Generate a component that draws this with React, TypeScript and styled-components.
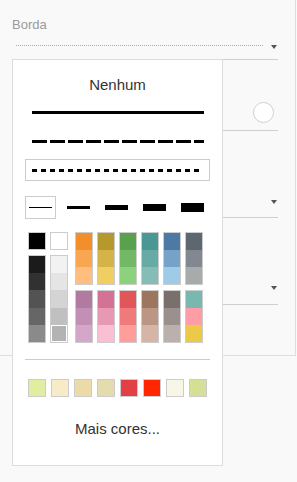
import React from 'react';
import styled, { createGlobalStyle } from 'styled-components';

const Global = createGlobalStyle`
  html, body { margin: 0; padding: 0; background: #f9f9f9; }
  body { font-family: "Liberation Sans", Arial, sans-serif; }
  * { box-sizing: border-box; }
`;

const Page = styled.div`
  position: relative;
  width: 297px;
  height: 482px;
  overflow: hidden;
`;

const Panel = styled.div`
  width: 296px;
  height: 356px;
  border-right: 1px solid #dedede;
  border-bottom: 1px solid #dedede;
  padding: 17px 17px 0 12px;
  display: flex;
  flex-direction: column;
`;

const Label = styled.div`
  font-size: 13px;
  line-height: 15px;
  color: #999;
`;

const Fields = styled.div`
  margin-left: 4px;
  flex: 1;
  display: flex;
  flex-direction: column;
`;

const DropRow = styled.div`
  margin-top: 13px;
  margin-bottom: 10px;
  height: 4px;
  display: flex;
  align-items: flex-start;
`;

const Dotted = styled.div`
  flex: 1;
  border-top: 1px dotted #aaa;
`;

const Arrow = styled.div`
  width: 0;
  height: 0;
  border-left: 3px solid transparent;
  border-right: 3px solid transparent;
  border-top: 4px solid #555;
  margin-left: 8px;
  margin-right: 1px;
`;

const Row = styled.div<{ $h?: number; $pb?: number }>`
  border-top: 1px solid #cfcfcf;
  height: ${(p) => (p.$h ? `${p.$h}px` : 'auto')};
  flex: ${(p) => (p.$h ? 'none' : '1')};
  display: flex;
  align-items: flex-end;
  justify-content: flex-end;
  padding-bottom: ${(p) => p.$pb ?? 0}px;
`;

const Circle = styled.div`
  width: 21px;
  height: 21px;
  border-radius: 50%;
  border: 1px solid #cfcfcf;
  background: #fff;
  margin-right: 4px;
`;

const BlueMark = styled.div`
  width: 6px;
  height: 6px;
  border-radius: 2px;
  background: #5b9bd5;
  margin-right: 44px;
  margin-bottom: 1px;
`;

const Popup = styled.div`
  position: absolute;
  left: 12px;
  top: 59px;
  width: 211px;
  height: 407px;
  background: #fff;
  border: 1px solid #dcdcdc;
  padding: 14px 12px 0 12px;
  display: flex;
  flex-direction: column;
`;

const Title = styled.div`
  height: 22px;
  line-height: 22px;
  font-size: 15px;
  color: #333;
  text-align: center;
`;

const Options = styled.div`
  margin-top: 5px;
  display: flex;
  flex-direction: column;
  gap: 7px;
`;

const LineOption = styled.div<{ $selected?: boolean }>`
  height: 22px;
  border: 1px solid ${(p) => (p.$selected ? '#cccccc' : 'transparent')};
  padding: 9px 0 0 6px;
`;

const StrokeLine = styled.div<{ $kind: 'solid' | 'dash' | 'dot' }>`
  height: 3px;
  width: ${(p) => (p.$kind === 'dot' ? 169 : 172)}px;
  background: ${(p) =>
    p.$kind === 'solid'
      ? '#000'
      : p.$kind === 'dash'
      ? 'repeating-linear-gradient(to right, #000 0 15px, transparent 15px 18px)'
      : 'repeating-linear-gradient(to right, #000 0 5px, transparent 5px 9px)'};
`;

const Weights = styled.div`
  margin-top: 15px;
  display: flex;
  gap: 7px;
`;

const WeightCell = styled.div<{ $selected?: boolean }>`
  width: 31px;
  height: 23px;
  border: 1px solid ${(p) => (p.$selected ? '#cccccc' : 'transparent')};
  display: flex;
  align-items: center;
  justify-content: center;
`;

const WeightLine = styled.div<{ $w: number }>`
  width: 23px;
  height: ${(p) => p.$w}px;
  background: #000;
`;

const Grid = styled.div`
  margin-top: 13px;
  padding-left: 3px;
  display: flex;
  gap: 7px;
`;

const Group = styled.div`
  display: flex;
  gap: 4px;
`;

const Stack = styled.div`
  display: flex;
  flex-direction: column;
  gap: 5px;
`;

const Column = styled.div<{ $h: number }>`
  width: 18px;
  height: ${(p) => p.$h}px;
  border: 1px solid #cccccc;
  display: flex;
  flex-direction: column;
`;

const Cell = styled.div<{ $c: string; $selected?: boolean }>`
  flex: 1;
  background: ${(p) => p.$c};
  box-shadow: ${(p) => (p.$selected ? 'inset 0 0 0 1px #fff' : 'none')};
`;

const Divider = styled.div`
  margin-top: 16px;
  height: 1px;
  background: #cccccc;
`;

const Recent = styled.div`
  margin-top: 19px;
  padding-left: 3px;
  display: flex;
  gap: 5px;
`;

const Swatch = styled.div<{ $c: string }>`
  width: 18px;
  height: 18px;
  border: 1px solid #cccccc;
  background: ${(p) => p.$c};
`;

const More = styled.div`
  margin-top: 23px;
  font-size: 15px;
  line-height: 17px;
  color: #333;
  text-align: center;
`;

const grays = ['#1b1b1b', '#313131', '#535353', '#666666', '#8a8a8a'];
const lights = ['#f2f2f2', '#e5e5e5', '#d4d4d4', '#c0c0c0', '#b3b3b3'];

const topColors = [
  ['#f28e2b', '#f8a64f', '#ffbe7d'],
  ['#b6992d', '#d4b446', '#f1ce63'],
  ['#59a14f', '#72b866', '#8cd17d'],
  ['#499894', '#68aaa5', '#86bcb6'],
  ['#4e79a7', '#77a2c8', '#a0cbe8'],
  ['#5c6770', '#81888f', '#a7abab'],
];

const bottomColors = [
  ['#b07aa1', '#c290b5', '#d4a6c8'],
  ['#d37295', '#e799b4', '#fabfd2'],
  ['#e15759', '#f07a7a', '#ff9d9a'],
  ['#9d7660', '#ba9683', '#d7b5a6'],
  ['#79706e', '#9a918e', '#bab0ac'],
  ['#79b8b0', '#ff9da7', '#edc948'],
];

const recent = ['#e2ee9f', '#f6ecc9', '#ecdba6', '#e4dcae', '#e33f47', '#ff2600', '#f8f6e7', '#d5df96'];

export default function App() {
  return (
    <Page>
      <Global />
      <Panel>
        <Label>Borda</Label>
        <Fields>
          <DropRow>
            <Dotted />
            <Arrow />
          </DropRow>
          <Row $h={71} $pb={7}>
            <Circle />
          </Row>
          <Row $h={87} $pb={13}>
            <BlueMark />
            <Arrow />
          </Row>
          <Row $h={87} $pb={14}>
            <Arrow />
          </Row>
          <Row />
        </Fields>
      </Panel>

      <Popup>
        <Title>Nenhum</Title>
        <Options>
          <LineOption>
            <StrokeLine $kind="solid" />
          </LineOption>
          <LineOption>
            <StrokeLine $kind="dash" />
          </LineOption>
          <LineOption $selected>
            <StrokeLine $kind="dot" />
          </LineOption>
        </Options>
        <Weights>
          {[1, 3, 5, 7, 9].map((w, i) => (
            <WeightCell key={w} $selected={i === 0}>
              <WeightLine $w={w} />
            </WeightCell>
          ))}
        </Weights>
        <Grid>
          <Group>
            <Stack>
              <Column $h={18}>
                <Cell $c="#000" />
              </Column>
              <Column $h={88}>
                {grays.map((c) => (
                  <Cell key={c} $c={c} />
                ))}
              </Column>
            </Stack>
            <Stack>
              <Column $h={18}>
                <Cell $c="#fff" />
              </Column>
              <Column $h={88}>
                {lights.map((c, i) => (
                  <Cell key={c} $c={c} $selected={i === 4} />
                ))}
              </Column>
            </Stack>
          </Group>
          <Group>
            {topColors.map((col, i) => (
              <Stack key={i}>
                <Column $h={53}>
                  {col.map((c) => (
                    <Cell key={c} $c={c} />
                  ))}
                </Column>
                <Column $h={53}>
                  {bottomColors[i].map((c) => (
                    <Cell key={c} $c={c} />
                  ))}
                </Column>
              </Stack>
            ))}
          </Group>
        </Grid>
        <Divider />
        <Recent>
          {recent.map((c) => (
            <Swatch key={c} $c={c} />
          ))}
        </Recent>
        <More>Mais cores...</More>
      </Popup>
    </Page>
  );
}
